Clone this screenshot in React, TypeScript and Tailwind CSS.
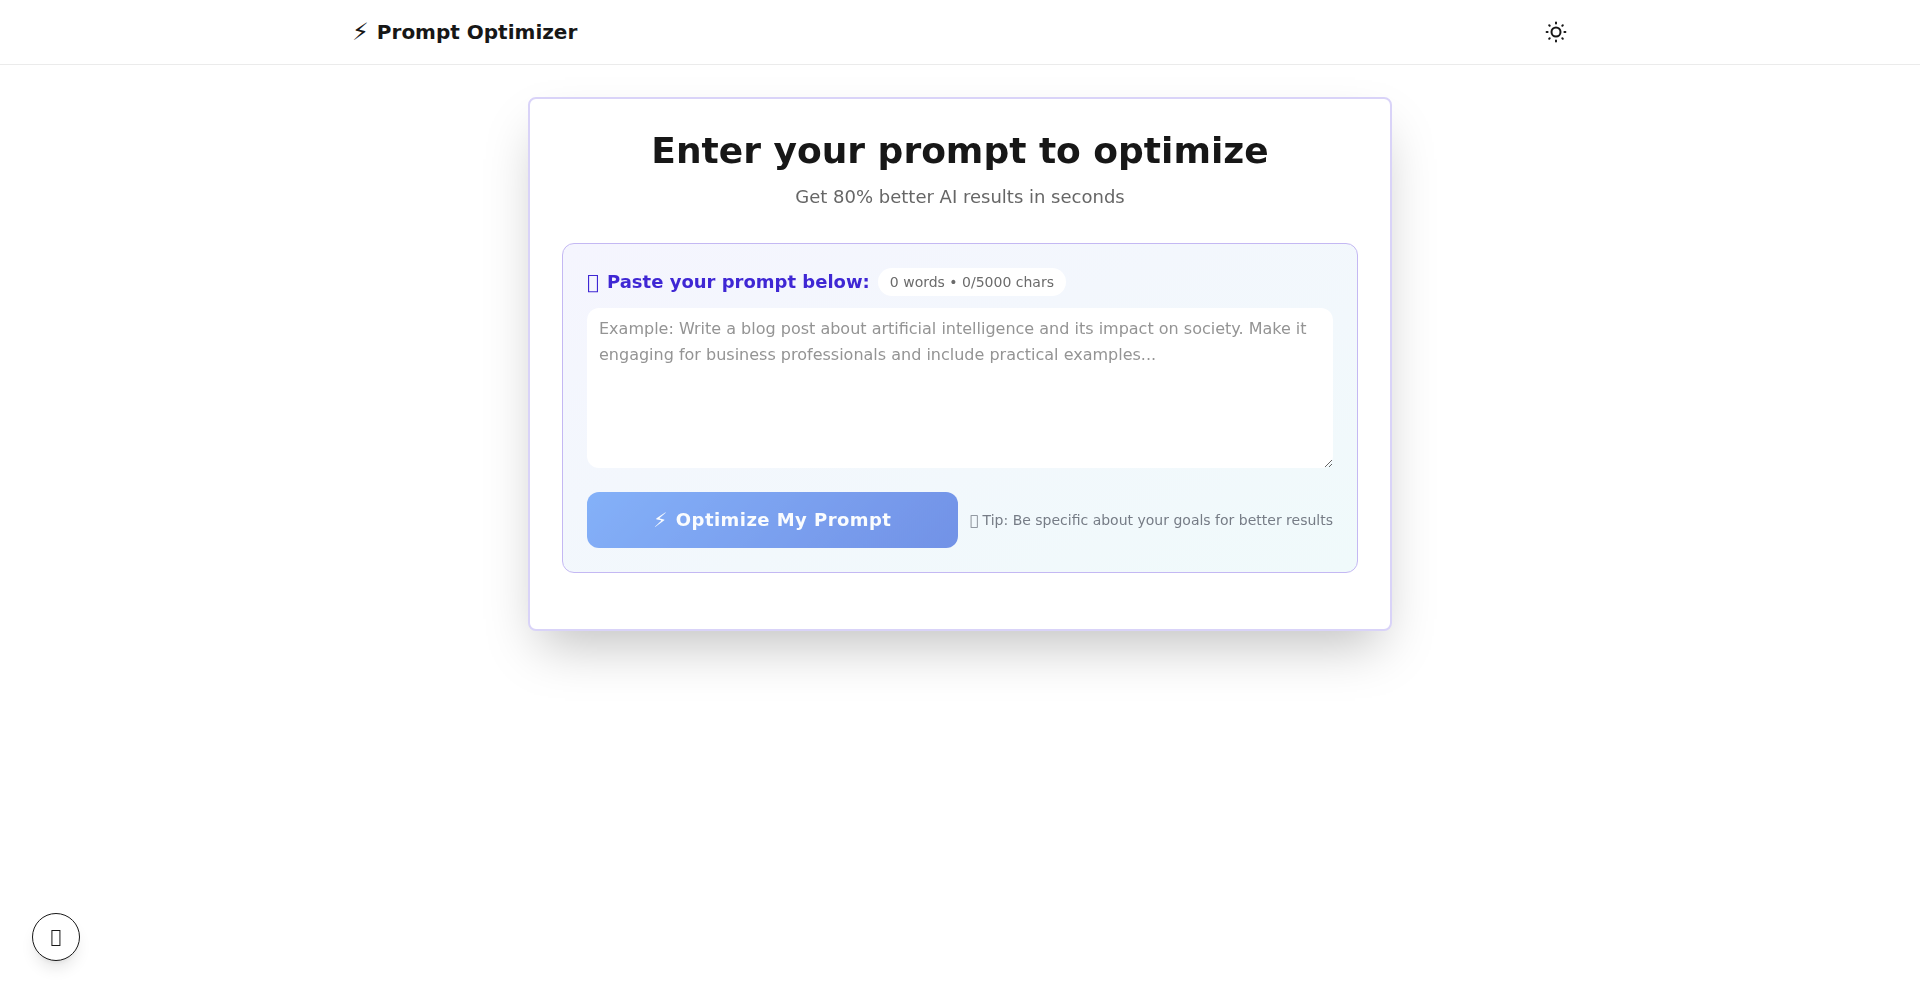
export default function App() {
  return (
    <div className="min-h-[993px] bg-white font-['DejaVu_Sans',sans-serif]">
      <header className="h-[65px] border-b border-[#ebebeb] bg-white">
        <div className="mx-auto flex h-full w-[1280px] items-center justify-between px-8">
          <div className="flex items-center gap-2 text-xl font-bold text-[#171717]">
            <span className="text-2xl leading-8 font-normal">⚡</span>
            <span>Prompt Optimizer</span>
          </div>
          <button className="flex h-6 w-6 items-center justify-center text-[#171717]">
            <svg width="24" height="24" viewBox="0 0 24 24" fill="none" stroke="currentColor" strokeWidth="2" strokeLinecap="round">
              <circle cx="12" cy="12" r="4.5" />
              <path d="M12 2.6v1M12 20.4v1M2.6 12h1M20.4 12h1M5.2 5.2l.5.5M18.3 18.3l.5.5M5.2 18.8l.5-.5M18.3 5.7l.5-.5" />
            </svg>
          </button>
        </div>
      </header>
      <main className="pt-8">
        <div className="mx-auto w-[864px] rounded-lg border-2 border-[#d9d3f8] bg-white px-8 pt-8 pb-[56px] shadow-[0_25px_50px_-12px_rgba(0,0,0,0.25)] will-change-transform">
          <h1 className="text-center text-4xl leading-[40px] font-bold text-[#171717]">Enter your prompt to optimize</h1>
          <p className="mt-3 text-center text-lg leading-7 text-[#666666]">Get 80% better AI results in seconds</p>
          <div className="mt-8 rounded-xl border border-[#c4b8f3] bg-gradient-to-br from-[#f5f5fe] to-[#f0fafb] p-6">
            <div className="mb-3 flex items-center gap-2">
              <span className="flex items-center gap-2 text-lg leading-7 font-semibold text-[#3f27d4]">
                <span className="text-xl font-normal">{"\uE000"}</span>
                <span>Paste your prompt below:</span>
              </span>
              <span className="rounded-full bg-white px-3 py-1 text-sm leading-5 text-[#6b6b6b]">0 words • 0/5000 chars</span>
            </div>
            <textarea
              className="block h-[160px] w-full rounded-xl bg-white px-3 py-2 text-base leading-[26px] text-[#171717] outline-none placeholder:text-[#949494]"
              placeholder="Example: Write a blog post about artificial intelligence and its impact on society. Make it engaging for business professionals and include practical examples..."
            />
            <div className="mt-6 flex items-center gap-3">
              <button className="flex h-[56px] flex-1 items-center justify-center gap-2 rounded-xl bg-[linear-gradient(135deg,#3b82f6,#1d4ed8)] text-lg font-semibold tracking-wide text-white opacity-60">
                <span className="text-xl font-normal">⚡</span>
                <span>Optimize My Prompt</span>
              </button>
              <span className="text-sm text-[#767c86]">{"\uE000"} Tip: Be specific about your goals for better results</span>
            </div>
          </div>
        </div>
      </main>
      <button className="fixed left-8 bottom-8 flex h-12 w-12 items-center justify-center rounded-full border border-[#171717] bg-white text-lg text-[#171717] shadow-lg">{"\uE000"}</button>
    </div>
  );
}
